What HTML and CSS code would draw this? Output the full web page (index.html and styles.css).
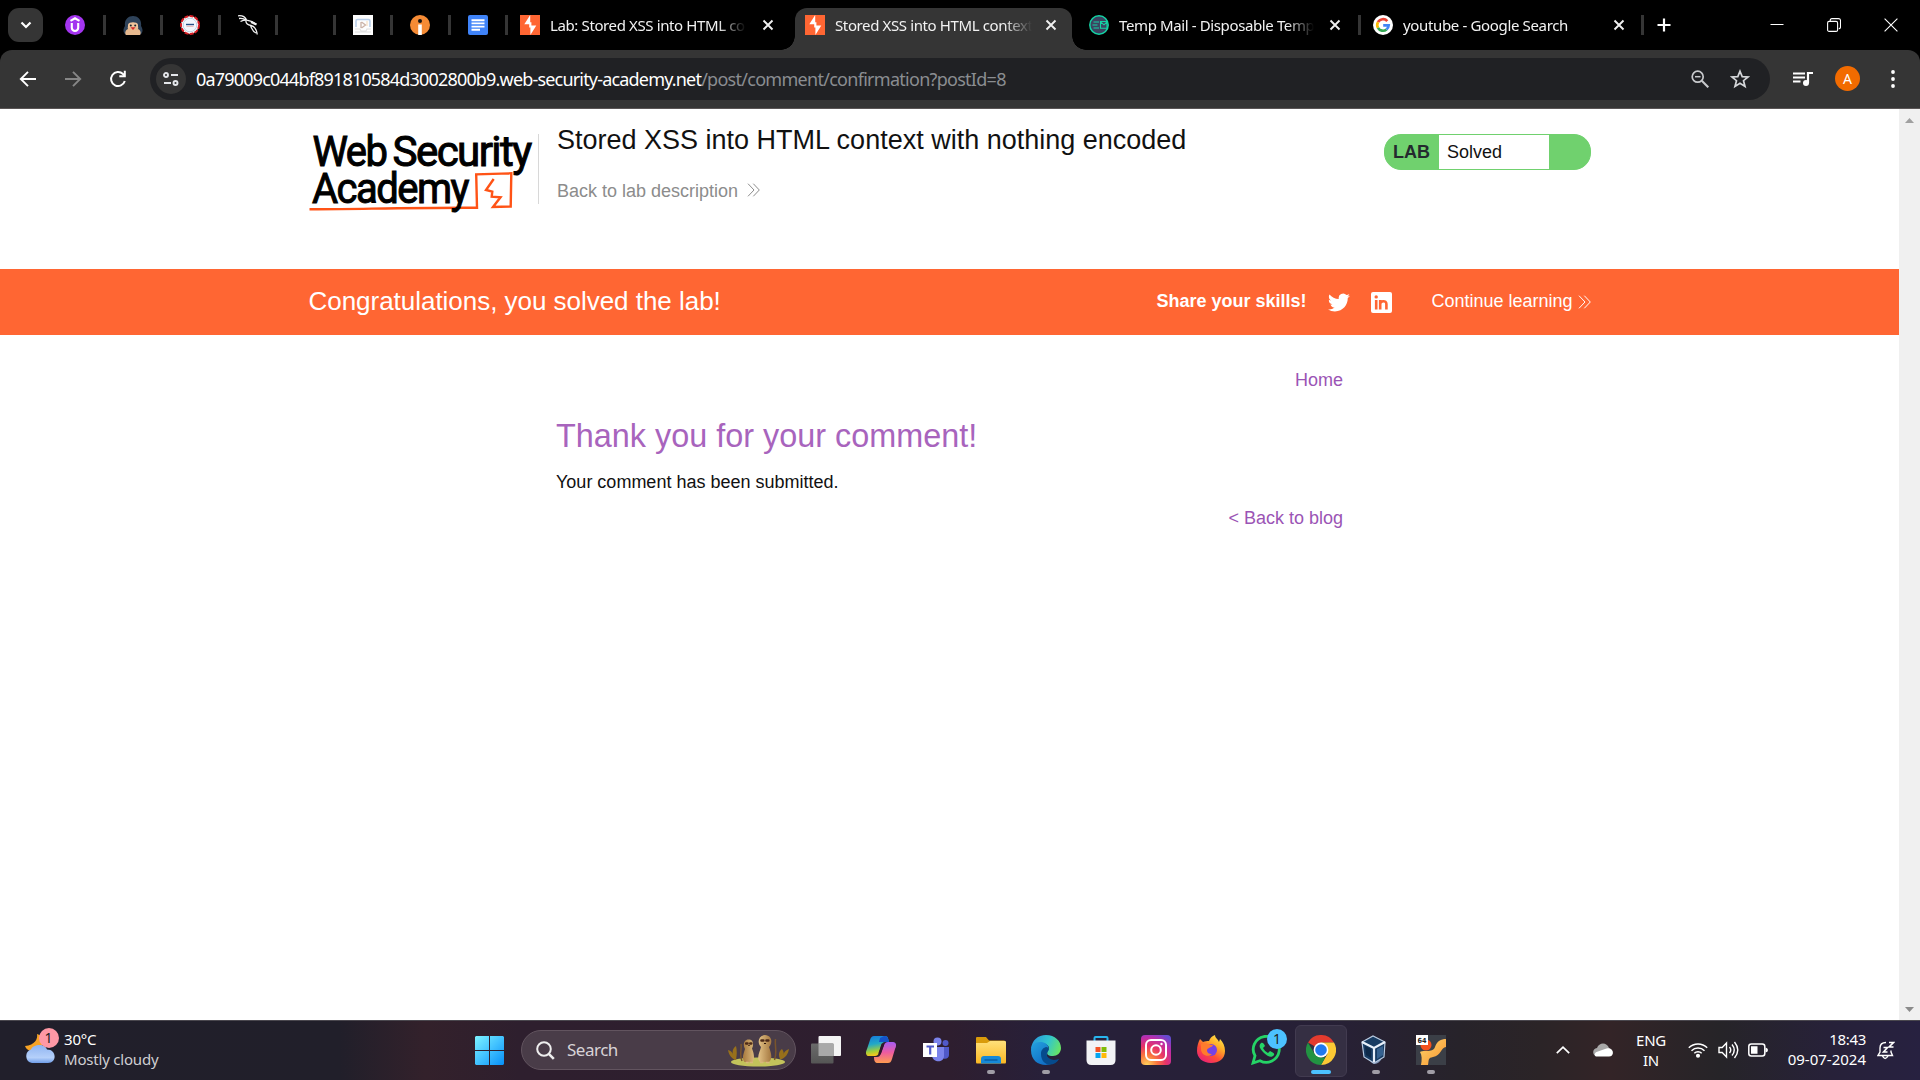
FILE: index.html
```html
<!DOCTYPE html>
<html lang="en">
<head>
<meta charset="utf-8">
<title>Stored XSS into HTML context with nothing encoded</title>
<link rel="stylesheet" href="styles.css">
</head>
<body>
<svg class="defs" width="0" height="0">
  <defs>
    <symbol id="burp" viewBox="0 0 20 20"><rect width="20" height="20" fill="#ff6633"/><path d="M10.200 0 4.300 9.300h4.900v3.300h1.200V20l5.900-9.500h-4.900V7.300h-1.200z" fill="#fff"/></symbol>
    <symbol id="x" viewBox="0 0 12 12"><path d="M1.500 1.500l9 9M10.500 1.500l-9 9" stroke="#f0f0f0" stroke-width="1.900" fill="none"/></symbol>
    <symbol id="chev" viewBox="0 0 13 14"><path d="M1 .7 7 7 1 13.300M6.300.7l6 6.300-6 6.300" fill="none" stroke="currentColor" stroke-width="1"/></symbol>
  </defs>
</svg>

<header class="tabstrip">
  <button class="tab-search"><svg width="14" height="14" viewBox="0 0 14 14"><path d="M2.500 4.500 7 9l4.500-4.500" fill="none" stroke="#fff" stroke-width="2.200"/></svg></button>
  <div class="pinned">
    <span class="pin"><svg viewBox="0 0 20 20"><circle cx="10" cy="10" r="10" fill="#a435f0"/><path d="M5.500 5.800 10 3.300l4.500 2.500M6.800 8v4.800a3.200 3.200 0 0 0 6.400 0V8" fill="none" stroke="#fff" stroke-width="2.100"/></svg></span>
    <span class="pin"><svg viewBox="0 0 20 20"><path d="M3.500 20C-.5 18 0 14 2 11 1 5 5 1 10 1s9 4 8 10c2 3 2.500 7-1.500 9z" fill="#2e4259"/><path d="M3 20c-1.500-2-.5-5 2-6-1-3 1-5 5-5s6 2 5 5c2.500 1 3.500 4 2 6z" fill="#e7b98e"/><path d="M5 9.500c1-3 9-3 10 0v3H5z" fill="#f0c49b"/><circle cx="7.800" cy="10.500" r="1" fill="#17222e"/><circle cx="12.200" cy="10.500" r="1" fill="#17222e"/><path d="M7.500 12.300h5L10 15z" fill="#d62828"/></svg></span>
    <span class="pin"><svg viewBox="0 0 20 20"><circle cx="10" cy="10" r="9" fill="#fff" stroke="#d91f26" stroke-width="2" stroke-dasharray="4 1.200"/><circle cx="10" cy="10" r="6.800" fill="#f2f7fc" stroke="#a9c8e0" stroke-width=".8"/><path d="M6 9.500h8" stroke="#254f87" stroke-width="1.400"/><path d="M6.500 11.300h7" stroke="#e0877f" stroke-width=".6"/></svg></span>
    <span class="pin"><svg viewBox="0 0 20 20" fill="none" stroke="#f2f2f2"><path d="M0 .8c4-.5 7 1 8.500 4M1 3.500c3-.5 5 0 7.500 1.500M2.500 6.500c2-1.200 4-1.500 6-1.500 3 .5 6.500 1 9.500 4.500" stroke-width="1.300"/><path d="M8 5.500c-.5 3 2 4.500 5 5 3 .7 5.500 3 6.200 9M12.500 11c1.500 2.500 2 5.500 5.500 7" stroke-width="1.300"/><path d="M13 7l5.500 2.500" stroke-width="2.200"/></svg></span>
    <span class="pin"></span>
    <span class="pin"><svg viewBox="0 0 20 20"><rect width="20" height="20" fill="#fdfdfd"/><path d="M3 12V6q0-1.500 1.500-1.500h11Q17 4.500 17 6v6" fill="none" stroke="#b9cfea" stroke-width="1.600"/><path d="M8 7v6M8.500 7l4 3-4 3" stroke="#cbb3a8" stroke-width="1.300" fill="none"/><path d="M2 14h5l1 2h5l1-2h4M2 17h16" stroke="#e0e0e0" stroke-width="1.200" fill="none"/><path d="M14 6v5" stroke="#f5d9b7"/></svg></span>
    <span class="pin"><svg viewBox="0 0 20 20"><circle cx="10" cy="10" r="10" fill="#f58b35"/><path d="M8.200 20V9.500h3.600V20z" fill="#fff"/><circle cx="10" cy="6" r="2" fill="#151515"/></svg></span>
    <span class="pin"><svg viewBox="0 0 20 20"><rect width="20" height="20" rx="2" fill="#3f83f8"/><path d="M3.500 5.200h13M3.500 8.400h13M3.500 11.600h13M3.500 14.800h8.500" stroke="#fff" stroke-width="1.900"/></svg></span>
  </div>
  <div class="tab tab-lab"><svg class="fav"><use href="#burp"/></svg><span class="tab-title">Lab: Stored XSS into HTML context</span><svg class="x"><use href="#x"/></svg></div>
  <div class="tab tab-active"><svg class="fav"><use href="#burp"/></svg><span class="tab-title">Stored XSS into HTML context</span><svg class="x"><use href="#x"/></svg></div>
  <div class="tab tab-mail"><svg class="fav" viewBox="0 0 20 20"><circle cx="10" cy="10" r="9.200" fill="#3c4160" stroke="#14d3a4" stroke-width="1.500"/><path d="M4.500 7H10M3.500 10h5M4.500 13H10M11.500 6.500H18v6.800h-6.500zM11.500 6.800l3.500 3 3-2.800" fill="none" stroke="#14d3a4" stroke-width="1.100"/></svg><span class="tab-title">Temp Mail - Disposable Temporary</span><svg class="x"><use href="#x"/></svg></div>
  <div class="tab tab-google"><svg class="fav" viewBox="0 0 20 20"><circle cx="10" cy="10" r="10" fill="#fff"/><g fill="none" stroke-width="2.700"><path d="M14.300 6.100A5.700 5.700 0 0 0 5 7.200" stroke="#ea4335"/><path d="M5 7.200a5.700 5.700 0 0 0 0 5.600" stroke="#fbbc05"/><path d="M5 12.800a5.700 5.700 0 0 0 8.500 1.700" stroke="#34a853"/><path d="M13.500 14.500a5.700 5.700 0 0 0 2.200-4.200H10.200" stroke="#4285f4"/></g></svg><span class="tab-title">youtube - Google Search</span><svg class="x"><use href="#x"/></svg></div>
  <svg class="newtab" width="14" height="14" viewBox="0 0 14 14"><path d="M7 .5v13M.5 7h13" stroke="#fff" stroke-width="2.200"/></svg>
  <div class="winctl">
    <svg viewBox="0 0 14 14"><path d="M.5 6.500h13" stroke="#fff" stroke-width="1"/></svg>
    <svg viewBox="0 0 14 14" fill="none" stroke="#fff" stroke-width="1.100"><rect x=".6" y="3.400" width="10" height="10" rx="1.500"/><path d="M3.200 3V2.600Q3.200.6 5 .6h6.500q2 0 2 2v6.200q0 2-1.800 2"/></svg>
    <svg viewBox="0 0 14 14"><path d="M.6.6l12.800 12.800M13.400.6.6 13.400" stroke="#fff" stroke-width="1.100"/></svg>
  </div>
</header>

<div class="toolbar-back">
<nav class="toolbar">
  <svg class="nav-ic" viewBox="0 0 18 18"><path d="M17 9H2.500M9 1.800 1.800 9 9 16.200" fill="none" stroke="#fff" stroke-width="1.900"/></svg>
  <svg class="nav-ic" viewBox="0 0 18 18"><path d="M1 9h14.500M9 1.800 16.200 9 9 16.200" fill="none" stroke="#868686" stroke-width="1.900"/></svg>
  <svg class="nav-ic" viewBox="0 0 18 18"><path d="M15.800 11A7 7 0 1 1 14 4l1.500 1.700" fill="none" stroke="#fff" stroke-width="2"/><path d="M14.800.8h2v6.500H10.300v-2h4.500z" fill="#fff"/></svg>
  <div class="omnibox">
    <span class="siteinfo"><svg width="16" height="14" viewBox="0 0 16 14" fill="none" stroke="#e4e6ea" stroke-width="1.900"><circle cx="3" cy="3" r="2"/><path d="M8 3h7M1 11h7"/><circle cx="12.500" cy="11" r="2"/></svg></span>
    <span class="url"><span class="host">0a79009c044bf891810584d3002800b9.web-security-academy.net</span><span class="path">/post/comment/confirmation?postId=8</span></span>
    <svg class="zoomic" width="18" height="18" viewBox="0 0 18 18" fill="none" stroke="#c8cacd"><circle cx="6.700" cy="6.700" r="5.500" stroke-width="1.700"/><path d="M4 6.700h5.500" stroke-width="1.500"/><path d="M10.800 10.800l6.500 6.500" stroke-width="2.100"/></svg>
    <svg class="star" width="20" height="20" viewBox="0 0 20 20"><path d="M10 2.200l2.200 5.400 5.800.4-4.500 3.700 1.500 5.700-5-3.200-5 3.200 1.500-5.700L2 8l5.800-.4z" fill="none" stroke="#d5d7da" stroke-width="1.700"/></svg>
  </div>
  <svg class="media" width="20" height="16" viewBox="0 0 20 16"><path d="M0 2.500h12M0 6.500h12M0 10.500h7.500" stroke="#fff" stroke-width="2"/><path d="M15 12V2h5" fill="none" stroke="#fff" stroke-width="2.200"/><circle cx="13" cy="12" r="3" fill="#fff"/></svg>
  <span class="avatar">A</span>
  <svg class="kebab" width="4" height="18" viewBox="0 0 4 18" fill="#fff"><circle cx="2" cy="2" r="1.900"/><circle cx="2" cy="9" r="1.900"/><circle cx="2" cy="16" r="1.900"/></svg>
</nav>
</div>

<div class="viewport">
  <main class="page">
    <section class="lab-head">
      <svg class="logo" width="226" height="84" viewBox="309 130 226 84">
        <g class="logo-text">
          <text x="312.500" y="166" textLength="74" lengthAdjust="spacingAndGlyphs">Web</text>
          <text x="392.500" y="166" textLength="138" lengthAdjust="spacingAndGlyphs">Security</text>
        </g>
        <path d="M309.500 209.200C350 209.600 400 207.400 477 207.700L476.200 174.300 511.300 173.300 510.700 206.500 493 207 500.500 197.300 491.700 196.700 492.300 191.700 486 190 493.700 179" fill="none" stroke="#ff5316" stroke-width="2.400"/>
        <text class="logo-text" x="312" y="203" textLength="156" lengthAdjust="spacingAndGlyphs">Academy</text>
      </svg>
      <div class="lab-title">
        <h2>Stored XSS into HTML context with nothing encoded</h2>
        <a class="back">Back to lab description <svg width="13" height="14"><use href="#chev"/></svg></a>
      </div>
      <div class="lab-status"><b>LAB</b><span>Solved</span></div>
    </section>
    <section class="banner">
      <div class="banner-in">
        <h4>Congratulations, you solved the lab!</h4>
        <b>Share your skills!</b>
        <svg class="tw" width="22" height="19" viewBox="0 2 24 20"><path fill="#fff" d="M23.950 4.570a10 10 0 0 1-2.820.770 4.960 4.960 0 0 0 2.160-2.720c-.950.550-2 .950-3.130 1.180a4.920 4.920 0 0 0-8.380 4.480C7.690 8.090 4.070 6.130 1.640 3.160a4.820 4.820 0 0 0-.670 2.480c0 1.710.870 3.210 2.190 4.100a4.900 4.900 0 0 1-2.230-.620v.060a4.920 4.920 0 0 0 3.950 4.830 5 5 0 0 1-2.210.090 4.940 4.940 0 0 0 4.600 3.420A9.870 9.870 0 0 1 0 19.540a14 14 0 0 0 7.550 2.210c9.050 0 14-7.500 14-13.980l-.020-.640a9.940 9.940 0 0 0 2.420-2.560z"/></svg>
        <svg class="li" width="21" height="21" viewBox="0 0 21 21"><rect width="21" height="21" rx="2" fill="#fff"/><path d="M5.200 8v9.500M9.200 8v9.500M9.200 12c0-3.500 6.200-4 6.200 0v5.500" fill="none" stroke="#ff6633" stroke-width="2.600"/><circle cx="5.200" cy="4.900" r="1.700" fill="#ff6633"/></svg>
        <a>Continue learning <svg width="13" height="14"><use href="#chev"/></svg></a>
      </div>
    </section>
    <section class="content">
      <a class="right">Home</a>
      <h1>Thank you for your comment!</h1>
      <p>Your comment has been submitted.</p>
      <a class="right">&lt; Back to blog</a>
    </section>
  </main>
  <aside class="scroll"><svg width="9" height="5" viewBox="0 0 9 5"><path d="M0 5 4.500 0 9 5z" fill="#a0a0a0"/></svg><svg width="9" height="5" viewBox="0 0 9 5"><path d="M0 0h9L4.500 5z" fill="#8b8b8b"/></svg></aside>
</div>

<footer class="taskbar">
  <div class="weather">
    <span class="wicon"><svg width="30" height="30" viewBox="0 0 30 30"><defs><linearGradient id="cl" x2="0" y2="1"><stop offset="0" stop-color="#8fb4f2"/><stop offset=".7" stop-color="#b5d0fa"/><stop offset="1" stop-color="#6f9de8"/></linearGradient></defs><path d="M12 0c1 5-2 11-12 12 2 5 6 5 9 5l8-3V2z" fill="#f7a325"/><path d="M7 29a7 7 0 0 1-1-13.500C8 10 20 9 22 15.500c10 0 10 13.500 1 13.500z" fill="url(#cl)"/></svg><i class="badge pink">1</i></span>
    <span class="wtext"><span>30°C</span><span class="dim">Mostly cloudy</span></span>
  </div>
  <svg class="start" width="29" height="29" viewBox="0 0 29 29"><defs><linearGradient id="wn" x2="1" y2="1"><stop offset="0" stop-color="#7df3ff"/><stop offset=".5" stop-color="#42c2ff"/><stop offset="1" stop-color="#078ff8"/></linearGradient></defs><path d="M1 0h13v14H0V1zM15 0h13l1 1v13H15zM0 15h14v14H1l-1-1zM15 15h14v13l-1 1H15z" fill="url(#wn)"/></svg>
  <div class="search">
    <svg width="19" height="19" viewBox="0 0 19 19" fill="none" stroke="#eee"><circle cx="8" cy="8" r="6.800" stroke-width="2"/><path d="M12.800 12.800l5 5" stroke-width="2.600"/></svg>
    <span>Search</span>
    <svg class="meerkats" width="62" height="33" viewBox="0 0 62 33"><defs><linearGradient id="mk"><stop offset="0" stop-color="#a87a3e"/><stop offset=".5" stop-color="#e8c88c"/><stop offset="1" stop-color="#a57840"/></linearGradient></defs><ellipse cx="31" cy="28" rx="27" ry="4.500" fill="#c3c35b"/><path d="M15 27c-3-6 0-12-1-17M47.500 26c3-8 0-14 1-21" fill="none" stroke="#79542c" stroke-width="1.500"/><path d="M8 26C5 24 2 22 1 16c4 1 5 4 5 5-1-4 0-7 3-9 1 4 1 8 0 14zM53 25c-2-4-1-8 2-10 2 3 2 4 1 6 1-3 3-5 6-6-1 5-3 8-7 10z" fill="#98701b"/><path d="M17.500 28c-3-4-1-8 .5-13-2.500-4-1-9.500 3.500-9.500 5 0 5.500 5 3.500 9 2 5 3 10 .5 13.500zM33 28c-4-5 0-10 1-15-4-4-3-11.500 4-12 7 .5 8 7.500 4 12 2 6 4 11 0 15z" fill="url(#mk)"/><path d="M19 28.500h2.500M23 28.500h3M33 28.500h3.500M39 28.500h3.500" stroke="#d9b77b" stroke-width="1.600"/><path d="M19.200 9.500h1.300M23.300 9.500h1M34.500 6.500h1.800M39.500 6.500h1.800" stroke="#4d2a18" stroke-width="2.600" stroke-linecap="round"/><path d="M21.300 11.500h1.400M37 9.500h2" stroke="#30180e" stroke-width="1.200"/></svg>
  </div>
  <div class="apps">
    <span class="app"><svg viewBox="0 0 30 30"><defs><linearGradient id="tv" x2="0" y2="1"><stop offset="0" stop-color="#6b6b6b"/><stop offset="1" stop-color="#555"/></linearGradient></defs><rect x="7.500" y="1" width="22.500" height="20" rx="1" fill="#f4f4f4"/><rect y="8.500" width="22.500" height="20" rx="1" fill="url(#tv)"/><path d="M7.500 8.500h15V21h-15z" fill="#a9a9a9"/></svg></span>
    <span class="app"><svg viewBox="0 0 30 30"><defs><linearGradient id="ca" x2=".2" y2="1"><stop offset="0" stop-color="#1478dc"/><stop offset=".45" stop-color="#22a8c8"/><stop offset=".8" stop-color="#a4cf38"/><stop offset="1" stop-color="#f6c51e"/></linearGradient><linearGradient id="cb" x2="0" y2="1"><stop offset="0" stop-color="#a55cf5"/><stop offset=".5" stop-color="#ee5ca0"/><stop offset="1" stop-color="#ff9c50"/></linearGradient></defs><path d="M8 1h11c3 0 3 2 4 6h-4c-2 0-3 1-4 4l-2 7c-1 2-2 3-4 3H3C0 21-1 18 1 14L4 5c1-3 2-4 4-4z" fill="url(#ca)"/><path d="M18 1c3 0 4 1 5 6h-5l-5 0 1-4z" fill="#1453ca"/><path d="M22 28H12c-3 0-4-2-4-6h3c2 0 3-1 4-4l3-8c1-2 2-3 4-3h5c3 0 4 3 2 7l-3 10c-1 3-2 4-4 4z" fill="url(#cb)"/><path d="M17 9l-3.500 10" stroke="#32172e" stroke-width="2.600"/></svg></span>
    <span class="app"><svg viewBox="0 0 30 30"><circle cx="16.500" cy="6.500" r="4" fill="#7b83eb"/><circle cx="24.500" cy="8" r="3" fill="#5059c9"/><path d="M19 12h9v8c0 4-5 5-8 2z" fill="#5059c9"/><path d="M11 12h12v9c0 7-11 7-12 0z" fill="#7b83eb"/><rect x="2" y="8" width="14" height="14" fill="#fff"/><path d="M5.500 11.500h7.500M9.200 11.500v8" stroke="#5059c9" stroke-width="2.200"/></svg></span>
    <span class="app run"><svg viewBox="0 0 30 30"><defs><linearGradient id="fo" x2="0" y2="1"><stop offset="0" stop-color="#ffe07a"/><stop offset="1" stop-color="#fbb822"/></linearGradient></defs><path d="M0 9V3q0-1 1-1h9l3 3.500h15q1 0 1 1V12H0z" fill="#d99b0b"/><path d="M0 8h11l3-2h15q1 0 1 1v20q0 1.500-1 1.500H1q-1 0-1-1.500z" fill="url(#fo)"/><path d="M5 28.500V24q0-3 3-3h14q3 0 3 3v4.500z" fill="#1689d8"/><path d="M8.500 25h13" stroke="#0a5ca2" stroke-width="1.400"/></svg></span>
    <span class="app run"><svg viewBox="0 0 30 30"><defs><linearGradient id="e1" x1="0" y1=".4" x2="1" y2=".7"><stop offset="0" stop-color="#299bdc"/><stop offset=".5" stop-color="#31c5cf"/><stop offset="1" stop-color="#6be65e"/></linearGradient><linearGradient id="e2" x2="1" y2="1"><stop offset="0" stop-color="#24a2df"/><stop offset="1" stop-color="#0a5bbb"/></linearGradient></defs><path d="M0 14C1 5 7 0 15 0c9 0 15 6 15 13 0 5-4 8-8 8-5 0-7-2-5-5 3-5-2-8-7-8S2 11 0 14z" fill="url(#e1)"/><path d="M0 15c0-5 4-8 9-8 6 0 10 4 8 9-2 1-3 9 5 10 4 0 6-2 6-2-7 9-28 9-28-9z" fill="url(#e2)"/><path d="M10 19c0-4 2-6 5-7 3 0 3 3 2 4-4 5 2 9 6 9 3 0 4-1 5-1-5 9-18 7-18-5z" fill="#064b8d"/></svg></span>
    <span class="app"><svg viewBox="0 0 30 30"><path d="M8.500 8V3q0-1 1-1h11q1 0 1 1v5" fill="none" stroke="#28b5ee" stroke-width="2"/><path d="M.5 5.500h29V25q0 5-5 5H5.500q-5 0-5-5z" fill="#f2f3f5"/><path d="M9.500 12h5v5h-5z" fill="#f35325"/><path d="M15.500 12h5v5h-5z" fill="#81bc06"/><path d="M9.500 18h5v5h-5z" fill="#05a6f0"/><path d="M15.500 18h5v5h-5z" fill="#ffba08"/></svg></span>
    <span class="app"><svg viewBox="0 0 30 30"><defs><radialGradient id="ig" cx=".2" cy="1" r="1.150"><stop offset="0" stop-color="#ffd45c"/><stop offset=".3" stop-color="#f9763e"/><stop offset=".55" stop-color="#e73368"/><stop offset=".8" stop-color="#bd2daa"/><stop offset="1" stop-color="#654bd1"/></radialGradient></defs><rect width="30" height="30" rx="4" fill="url(#ig)"/><g fill="none" stroke="#fff" stroke-width="2"><rect x="5" y="5" width="20" height="20" rx="5"/><circle cx="15" cy="15" r="4.800"/></g><circle cx="20.500" cy="9" r="1.200" fill="#fff"/></svg></span>
    <span class="app"><svg viewBox="0 0 30 30"><defs><linearGradient id="ff" x1=".9" x2=".2" y2="1"><stop offset="0" stop-color="#fff152"/><stop offset=".35" stop-color="#ffad27"/><stop offset=".65" stop-color="#ff4f35"/><stop offset="1" stop-color="#e91c7d"/></linearGradient></defs><path d="M4 4c1 1 2 2 3 3 2-1 4-1 6-1 1-3 3-5 6-6 0 3 3 4 4 7l1-3c3 3 5 7 5 12 0 8-6 12-14 12S1 23 1 16c0-5 1-8 3-12z" fill="url(#ff)"/><circle cx="15" cy="15" r="6" fill="#7542e5"/><path d="M5 9c4-2 8 1 12 1-1 3-5 2-6 5 0 3 2 4 5 4-4 4-11 1-11-5z" fill="#ff7b2d"/></svg></span>
    <span class="app"><svg viewBox="0 0 30 30"><path d="M2 28l2-7.200a13 13 0 1 1 5 4.900z" fill="none" stroke="#25d366" stroke-width="2.800"/><path d="M10 8c-3 3-1 6 3 10s8 5 10 2c1-2-2-3-4-4l-2 2c-2-1-4-3-5-5l2-2c-1-2-2-4-4-3z" fill="#25d366"/></svg><i class="badge blue">1</i></span>
    <span class="app on"><svg viewBox="0 0 30 30"><path d="M15 15 2 7.500A15 15 0 0 1 28 7.500H15z" fill="#e33b2e"/><path d="M15 7.500h13A15 15 0 0 1 15 30l6.500-11.200z" fill="#fcc934"/><path d="M2 7.500 8.500 18.700 15 22.500h4.300L15 30A15 15 0 0 1 2 7.500z" fill="#229342"/><circle cx="15" cy="15" r="7.400" fill="#fff"/><circle cx="15" cy="15" r="5.800" fill="#2179ee"/></svg></span>
    <span class="app run"><svg class="vbox" viewBox="0 0 30 30"><path d="M8 23l5 5c3 2 7 1 10-5z" fill="#8297b8"/><path d="M3 7 14 1l12 6-1 15-10 6L5 22z" fill="#183c63" stroke="#b9cbe2" stroke-width="1.200"/><path d="M3 7l12 6 11-6M15 13v14" fill="none" stroke="#e8f0fa" stroke-width="2.200"/><path d="M6 11l6 3v9l-5-3z" fill="#0d2949"/><path d="M18 14l6-3v9l-6 4z" fill="#35618f"/></svg></span>
    <span class="app run"><svg viewBox="0 0 30 30"><defs><linearGradient id="bu" x2="1" y2="1"><stop offset="0" stop-color="#ffd46a"/><stop offset="1" stop-color="#f79431"/></linearGradient></defs><rect width="30" height="30" fill="#3b3f47"/><path d="M30 4c-5 0-9 2-11 8-1 4-6 4-10 4-2 0-4 0-5 1 2 3 2 8 1 13h7c1-6 0-7 5-8 8-1 8-10 13-10z" fill="url(#bu)"/><circle cx="10" cy="10" r="5.500" fill="#f4511e"/><rect width="12" height="10" fill="#fff"/><text x="1.500" y="7.700" font-family="DejaVu Sans" font-size="7" font-weight="700" fill="#222" textLength="9" lengthAdjust="spacingAndGlyphs">64</text></svg></span>
  </div>
  <div class="tray">
    <svg class="t-up" width="14" height="8" viewBox="0 0 14 8"><path d="M.8 7.200 7 1.200l6.200 6" fill="none" stroke="#fff" stroke-width="1.700"/></svg>
    <svg class="t-cloud" width="20" height="14" viewBox="0 0 20 14"><path d="M3.500 13C-1 12-1 6 4 5c2-6 10-6 12 0 5 1 5 8 0 8z" fill="#a8a8a8"/><path d="M4 13.500c-3 0-3-3-.5-4.500L12 6c2-1 3-1 4.500-.5C21 7 21 13.500 16 13.500z" fill="#fff"/></svg>
    <span class="lang"><span>ENG</span><span>IN</span></span>
    <svg class="t-wifi" width="20" height="16" viewBox="0 0 20 16" fill="none" stroke="#fff" stroke-width="1.500"><path d="M.8 5.800a13 13 0 0 1 18.400 0M3.500 8.700a9.200 9.200 0 0 1 13 0M6.300 11.300a5.200 5.200 0 0 1 7.400 0"/><circle cx="10" cy="13.700" r="1.300" fill="#fff"/></svg>
    <svg class="t-vol" width="21" height="18" viewBox="0 0 21 18" fill="none" stroke="#fff" stroke-width="1.400"><path d="M1 6.500h3.200L8.500 2v14l-4.300-4.500H1z"/><path d="M11.500 6q2.500 3 0 6M14 3.500q4.500 5.500 0 11M16.500 1q6.500 8 0 16"/></svg>
    <svg class="t-bat" width="20" height="14" viewBox="0 0 20 14"><rect x=".8" y="1" width="16" height="12" rx="2.500" fill="none" stroke="#fff" stroke-width="1.500"/><path d="M3 3.300h6.500v7.400H3zM17.500 4.500Q20 5 20 7t-2.500 2.500z" fill="#fff"/></svg>
    <span class="clock"><span>18:43</span><span class="date">09-07-2024</span></span>
    <svg class="t-bell" width="18" height="19" viewBox="0 0 18 19" fill="none" stroke="#fff" stroke-width="1.400"><path d="M9 1.500C5 1.500 3 4 3 7v4l-2 3.500h14.500L14 11V9.500M5.500 15q2.500 5 5.500 0"/><path d="M6.500 6.500h4l-4 4.500h4M12 1.500h4.500L12 6h4.500" stroke-width="1.600"/></svg>
  </div>
</footer>
</body>
</html>
```
FILE: styles.css
```css
* { box-sizing: border-box; }
body { margin: 0; width: 1920px; height: 1080px; overflow: hidden; display: flex; flex-direction: column; background: #fff; font-family: "Noto Sans", sans-serif; }
svg { display: block; flex: none; }
.defs { position: absolute; }

.tabstrip { height: 50px; background: #000; display: flex; align-items: center; flex: none; }
.tab-search { margin: 0 0 0 8px; width: 35px; height: 34px; border: 0; border-radius: 11px; background: #353535; display: flex; align-items: center; justify-content: center; padding: 0; }
.pinned { display: flex; margin-left: 5px; }
.pin { width: 57.5px; height: 20px; padding-left: 17px; border-right: 3px solid #353535; }
.pin svg { width: 20px; height: 20px; }
.tab { display: flex; align-items: center; height: 42px; align-self: flex-end; color: #f2f2f2; font-size: 15px; letter-spacing: -0.38px; padding-bottom: 8px; }
.tab .fav { width: 20px; height: 20px; }
.tab .x { width: 12px; height: 12px; margin-left: auto; }
.tab-title { white-space: nowrap; overflow: hidden; margin-left: 10px; line-height: 24px; -webkit-mask-image: linear-gradient(90deg, #000 calc(100% - 28px), transparent); mask-image: linear-gradient(90deg, #000 calc(100% - 28px), transparent); }
.tab-lab { width: 287px; padding-left: 12px; padding-right: 21px; }
.tab-lab .tab-title { width: 196px; }
.tab-active { position: relative; width: 277px; background: #353535; border-radius: 12px 12px 0 0; padding-left: 10px; padding-right: 15px; }
.tab-active::before, .tab-active::after { content: ""; position: absolute; bottom: 0; width: 14px; height: 14px; }
.tab-active::before { left: -14px; background: radial-gradient(circle at 0 0, transparent 13.5px, #353535 14px); }
.tab-active::after { right: -14px; background: radial-gradient(circle at 100% 0, transparent 13.5px, #353535 14px); }
.tab-active .tab-title { width: 197px; }
.tab-mail { width: 289px; padding-left: 17px; position: relative; padding-right: 19px; }
.tab-mail .tab-title { width: 195px; }
.tab-google { width: 283px; padding-left: 12px; padding-right: 18px; position: relative; }
.tab-google .tab-title { width: 200px; letter-spacing: -0.35px; }
.tab-mail::after, .tab-google::after { content: ""; position: absolute; right: 0; top: 7px; width: 3px; height: 20px; background: #353535; }
.tab-mail .x, .tab-google .x { margin-right: 1px; }
.newtab { margin-left: 13px; }
.winctl { margin-left: auto; padding-right: 22px; display: flex; gap: 43px; }
.winctl svg { width: 14px; height: 14px; }

.toolbar-back { background: #000; flex: none; }
.toolbar { height: 59px; padding-bottom: 1px; background: #353535; border-radius: 12px 12px 0 0; border-bottom: 1px solid #5a5555; display: flex; align-items: center; padding-left: 19px; }
.nav-ic { width: 18px; height: 18px; margin-right: 27px; }
.nav-ic:nth-child(3) { margin-right: 23px; }
.omnibox { width: 1620px; height: 42px; border-radius: 21px; background: #202124; display: flex; align-items: center; padding-left: 6px; }
.siteinfo { width: 30px; height: 30px; border-radius: 50%; background: #353535; display: flex; align-items: center; justify-content: center; }
.url { margin-left: 10px; font-size: 18px; white-space: nowrap; line-height: 24px; flex: 1; }
.host { color: #fff; letter-spacing: -0.82px; }
.path { color: #8a8d91; letter-spacing: -0.72px; }
.star { margin: 0 20px 0 21px; }
.media { margin-left: 23px; }
.avatar { margin-left: 22px; width: 25px; height: 25px; border-radius: 50%; background: #f26b00; color: #fff; display: flex; align-items: center; justify-content: center; font-size: 14px; }
.kebab { margin-left: 31px; }

.viewport { flex: 1; display: flex; min-height: 0; font-family: "Liberation Sans", Arial, sans-serif; font-size: 18px; line-height: 20px; }
.page { flex: 1; color: #111; }
.page h1, .page h2, .page h4, .page p { margin: 0; font-weight: 400; }
.scroll { width: 21px; background: #f0f0f0; display: flex; flex-direction: column; justify-content: space-between; align-items: center; padding: 9px 0 8px; }
.lab-head { width: 1282px; height: 160px; margin: 0 auto; display: flex; align-items: flex-start; }
.logo { margin-top: 21px; }
.logo-text { font-family: Roboto, sans-serif; font-size: 42px; letter-spacing: -1.6px; fill: #000; stroke: #000; stroke-width: 1px; }
.lab-title { margin-left: 3px; width: 820px; position: relative; padding: 15px 0 0 19.5px; }
.lab-title::before { content: ""; position: absolute; left: 0; top: 25px; width: 1px; height: 70px; background: #d8d8d8; }
.lab-title h2 { font-size: 27px; line-height: 32px; white-space: nowrap; }
.back { display: flex; align-items: center; gap: 9px; margin-top: 25px; color: #8c8c8c; }
.back svg { margin-top: -2px; }
.lab-status { margin: 25px 0 0 auto; width: 207px; height: 36px; border: 1px solid #70d16e; border-radius: 17px; background: #70d16e; display: flex; overflow: hidden; line-height: 34px; }
.lab-status b { width: 54px; padding-left: 8.5px; color: #242a2e; line-height: 35px; }
.lab-status span { width: 110px; background: #fff; padding-left: 8.5px; }
.banner { background: #ff6633; height: 66px; color: #fff; }
.banner-in { width: 1282px; height: 66px; margin: 0 auto; display: flex; align-items: center; padding-bottom: 2px; }
.banner h4 { font-size: 26px; line-height: 32px; width: 848px; letter-spacing: -0.03px; }
.banner b { width: 172px; }
.tw { margin-top: 3px; }
.li { margin: 2px 39px 0 21px; }
.banner a { display: flex; align-items: center; gap: 5px; }
.banner a svg { margin-top: 2px; }
.content { width: 787px; margin: 0 auto; padding-top: 35px; display: flex; flex-direction: column; }
.content .right { align-self: flex-end; color: #9b54b5; }
.content h1 { margin-top: 28px; font-size: 32.4px; line-height: 36px; color: #a864bd; }
.content p { margin: 18px 0 16px; }

.taskbar { height: 60px; flex: none; border-top: 1px solid #4a474e; padding-bottom: 1px; display: flex; align-items: center; color: #fff; background: linear-gradient(90deg, #211f2b 0, #211f2a 340px, #33212b 425px, #2e1f2e 520px, #2e1e2f 950px, #27203a 1050px, #272036 1330px, #27232a 1460px, #2b2427 1540px, #332427 1610px, #262428 1720px, #272139 1830px, #272140 1920px); font-size: 15px; line-height: 20px; }
.weather { display: flex; width: 475px; padding-left: 25px; }
.wicon { position: relative; width: 39px; padding-top: 4px; }
.badge { position: absolute; width: 20px; height: 20px; border-radius: 50%; font-style: normal; font-size: 14px; color: #222; text-align: center; line-height: 20px; }
.pink { background: #ff98a5; left: 13.5px; top: -2px; }
.blue { background: #4cc2ff; right: 6px; top: 9px; }
.wtext { display: flex; flex-direction: column; letter-spacing: -0.2px; margin-top: -1px; padding-bottom: 1px; }
.dim { color: #cfced2; }
.search { margin-left: 17px; width: 275px; height: 40px; border-radius: 20px; border: 1px solid #62545f; background: #493c48; display: flex; align-items: center; padding: 0 6px 0 14px; font-size: 17px; color: #d8d3d7; }
.search span { margin-left: 12px; letter-spacing: -0.5px; }
.meerkats { margin-left: auto; }
.apps { display: flex; margin-left: 2px; }
.app { width: 55px; height: 60px; display: flex; align-items: center; justify-content: center; position: relative; }
.app svg { width: 30px; height: 30px; }
.app .vbox { margin-right: 3px; }
.run::after { content: ""; position: absolute; bottom: 6px; width: 8px; height: 4px; border-radius: 2px; background: #a09da6; }
.on::before { content: ""; position: absolute; left: 2px; top: 5px; width: 50px; height: 50px; border-radius: 6px; border: 1px solid #423b50; background: #352f43; }
.on svg { position: relative; }
.on::after { content: ""; position: absolute; bottom: 6px; width: 20px; height: 4px; border-radius: 2px; background: #4cc2ff; }
.tray { display: flex; align-items: center; margin-left: auto; padding-right: 25px; letter-spacing: -0.3px; }
.t-cloud { margin-left: 23px; }
.lang { width: 36px; margin: 0 19px 0 20px; display: flex; flex-direction: column; text-align: center; padding-bottom: 1px; }
.t-vol { margin-left: 10px; }
.t-bat { margin-left: 9px; margin-right: 1px; }
.clock { width: 97px; text-align: right; display: flex; flex-direction: column; padding-bottom: 2px; }
.date { letter-spacing: 0; }
.t-bell { margin-left: 11px; }
```
